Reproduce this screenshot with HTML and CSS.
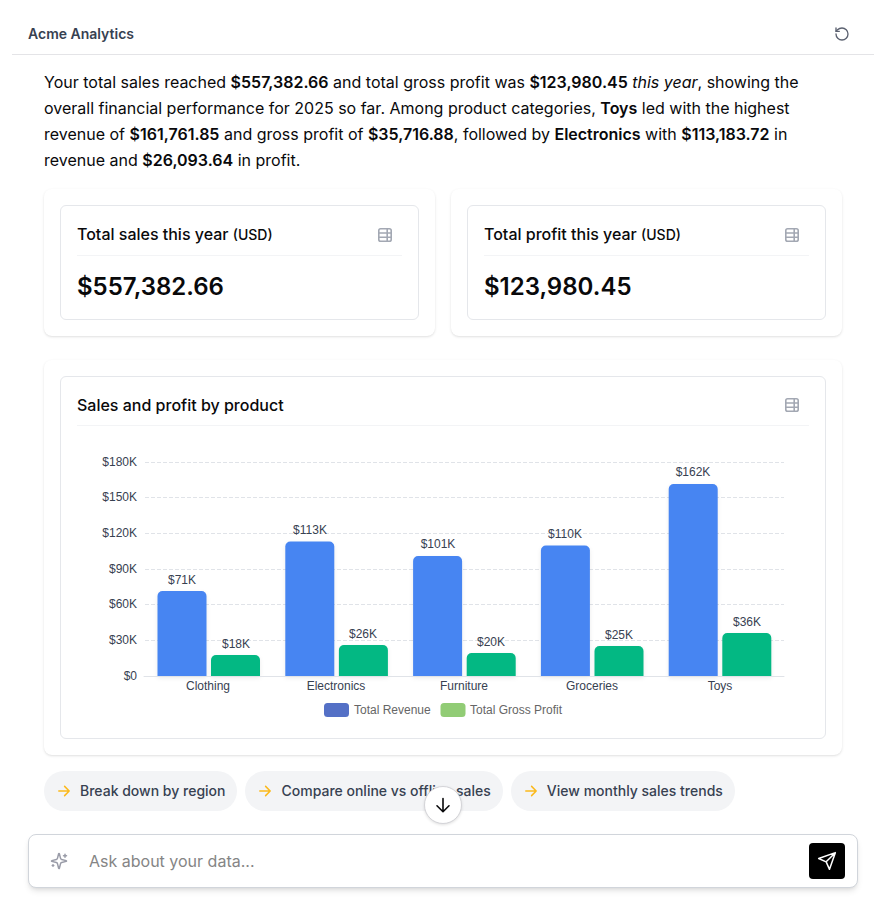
FILE: index.html
```html
<!DOCTYPE html>
<html lang="en">
<head>
<meta charset="utf-8">
<meta name="viewport" content="width=device-width, initial-scale=1">
<title>Acme Analytics</title>
<link rel="stylesheet" href="styles.css">
</head>
<body>
<svg class="defs" aria-hidden="true">
  <symbol id="icon-table" viewBox="0 0 16 16">
    <rect x="1.8" y="1.8" width="12.4" height="12.4" rx="1.8"/>
    <path d="M1.8 6h12.4M1.8 10.2h12.4M10.2 1.8v12.4"/>
  </symbol>
  <symbol id="icon-arrow" viewBox="0 0 16 16">
    <path d="M2.8 8h10.4M8.6 3.4 13.2 8l-4.6 4.6"/>
  </symbol>
</svg>
<div class="app">
  <header class="topbar">
    <h1 class="brand">Acme Analytics</h1>
    <button class="reset" type="button" aria-label="Restart conversation">
      <svg viewBox="0 0 24 24"><path d="M3 12a9 9 0 1 0 9-9 9.75 9.75 0 0 0-6.74 2.74L3 8"/><path d="M3 3v5h5"/></svg>
    </button>
  </header>

  <main class="thread">
    <p class="answer">Your total sales reached <strong>$557,382.66</strong> and total gross profit was <strong>$123,980.45</strong> <em>this year</em>, showing the overall financial performance for 2025 so far. Among product categories, <strong>Toys</strong> led with the highest revenue of <strong>$161,761.85</strong> and gross profit of <strong>$35,716.88</strong>, followed by <strong>Electronics</strong> with <strong>$113,183.72</strong> in revenue and <strong>$26,093.64</strong> in profit.</p>

    <div class="metrics">
      <section class="card">
        <div class="panel">
          <div class="panel-head">
            <h2 class="panel-title">Total sales this year <span class="unit">(USD)</span></h2>
            <button class="table-button" type="button" aria-label="View as table"><svg><use href="#icon-table"/></svg></button>
          </div>
          <p class="metric">$557,382.66</p>
        </div>
      </section>
      <section class="card">
        <div class="panel">
          <div class="panel-head">
            <h2 class="panel-title">Total profit this year <span class="unit">(USD)</span></h2>
            <button class="table-button" type="button" aria-label="View as table"><svg><use href="#icon-table"/></svg></button>
          </div>
          <p class="metric">$123,980.45</p>
        </div>
      </section>
    </div>

    <section class="card">
      <div class="panel">
        <div class="panel-head">
          <h2 class="panel-title">Sales and profit by product</h2>
          <button class="table-button" type="button" aria-label="View as table"><svg><use href="#icon-table"/></svg></button>
        </div>
        <svg class="chart" viewBox="0 0 732 296" role="img" aria-label="Sales and profit by product">
          <g class="grid">
            <path d="M68 36.5H707M68 71.5H707M68 107.5H707M68 143.5H707M68 178.5H707M68 214.5H707"/>
          </g>
          <g class="axis-y">
            <text x="60" y="40">$180K</text>
            <text x="60" y="75">$150K</text>
            <text x="60" y="111">$120K</text>
            <text x="60" y="147">$90K</text>
            <text x="60" y="182">$60K</text>
            <text x="60" y="218">$30K</text>
            <text x="60" y="254">$0</text>
          </g>
          <g class="revenue">
            <path d="M80.5 250V170a5 5 0 0 1 5-5h39a5 5 0 0 1 5 5V250z"/>
            <path d="M208.3 250V120.5a5 5 0 0 1 5-5h39a5 5 0 0 1 5 5V250z"/>
            <path d="M336.1 250V135a5 5 0 0 1 5-5h39a5 5 0 0 1 5 5V250z"/>
            <path d="M463.9 250V124.5a5 5 0 0 1 5-5h39a5 5 0 0 1 5 5V250z"/>
            <path d="M591.7 250V63a5 5 0 0 1 5-5h39a5 5 0 0 1 5 5V250z"/>
          </g>
          <g class="profit">
            <path d="M134 250V234a5 5 0 0 1 5-5h39a5 5 0 0 1 5 5V250z"/>
            <path d="M261.9 250V224a5 5 0 0 1 5-5h39a5 5 0 0 1 5 5V250z"/>
            <path d="M389.7 250V232a5 5 0 0 1 5-5h39a5 5 0 0 1 5 5V250z"/>
            <path d="M517.5 250V225a5 5 0 0 1 5-5h39a5 5 0 0 1 5 5V250z"/>
            <path d="M645.3 250V212a5 5 0 0 1 5-5h39a5 5 0 0 1 5 5V250z"/>
          </g>
          <path class="baseline" d="M67 250.5H707"/>
          <g class="labels">
            <text x="105" y="158">$71K</text>
            <text x="233" y="108">$113K</text>
            <text x="361" y="122">$101K</text>
            <text x="488" y="112">$110K</text>
            <text x="616" y="50">$162K</text>
            <text x="159" y="222">$18K</text>
            <text x="286" y="212">$26K</text>
            <text x="414" y="220">$20K</text>
            <text x="542" y="213">$25K</text>
            <text x="670" y="200">$36K</text>
            <text x="131" y="264">Clothing</text>
            <text x="259" y="264">Electronics</text>
            <text x="387" y="264">Furniture</text>
            <text x="515" y="264">Groceries</text>
            <text x="643" y="264">Toys</text>
          </g>
          <rect class="key-revenue" x="247" y="277" width="25" height="14" rx="3.5"/>
          <rect class="key-profit" x="363.5" y="277" width="25" height="14" rx="3.5"/>
          <g class="legend">
            <text x="277" y="288">Total Revenue</text>
            <text x="393" y="288">Total Gross Profit</text>
          </g>
        </svg>
      </div>
    </section>

    <div class="suggestions">
      <button class="chip" type="button"><svg><use href="#icon-arrow"/></svg><span class="chip-text">Break down by region</span></button>
      <button class="chip" type="button"><svg><use href="#icon-arrow"/></svg><span class="chip-text">Compare online vs offline sales</span></button>
      <button class="chip" type="button"><svg><use href="#icon-arrow"/></svg><span class="chip-text">View monthly sales trends</span></button>
    </div>
  </main>

  <footer class="dock">
    <button class="scroll-down" type="button" aria-label="Scroll to bottom">
      <svg viewBox="0 0 20 20"><path d="M10 3.5v13M4 10.8l6 5.9 6-5.9"/></svg>
    </button>
    <form class="composer">
      <svg class="sparkle" viewBox="0 0 24 24" aria-hidden="true"><path d="M9.937 15.5A2 2 0 0 0 8.5 14.063l-6.135-1.582a.5.5 0 0 1 0-.962L8.5 9.936A2 2 0 0 0 9.937 8.5l1.582-6.135a.5.5 0 0 1 .963 0L14.063 8.5A2 2 0 0 0 15.5 9.937l6.135 1.581a.5.5 0 0 1 0 .964L15.5 14.063a2 2 0 0 0-1.437 1.437l-1.582 6.135a.5.5 0 0 1-.963 0z"/><path d="M20 3v4M22 5h-4M4 17v2M5 18H3"/></svg>
      <input class="prompt" type="text" aria-label="Ask about your data" placeholder="Ask about your data...">
      <button class="send" type="submit" aria-label="Send">
        <svg viewBox="0 0 24 24"><path d="M22 2 11 13M22 2l-7 20-4-9-9-4z"/></svg>
      </button>
    </form>
  </footer>
</div>
</body>
</html>
```
FILE: styles.css
```css
* { box-sizing: border-box; }

body {
  margin: 0;
  background: #fff;
  color: #09090b;
  font-family: Inter, "Liberation Sans", sans-serif;
  font-size: 16px;
}

h1, h2, p { margin: 0; }

button {
  border: 0;
  padding: 0;
  background: none;
  color: inherit;
  font: inherit;
  cursor: pointer;
}

svg {
  display: block;
  fill: none;
  stroke: currentColor;
  stroke-linecap: round;
  stroke-linejoin: round;
}

.defs {
  position: absolute;
  width: 0;
  height: 0;
}

.app { margin: 0 11px 0 12px; }

.topbar {
  display: flex;
  align-items: center;
  justify-content: space-between;
  padding: 24px 24px 10px 16px;
  border-bottom: 1px solid #e4e4e7;
}

.brand {
  color: #374151;
  font-size: 14px;
  font-weight: 600;
  line-height: 20px;
}

.reset { color: #5b6170; }
.reset svg { width: 16px; height: 16px; stroke-width: 2; }

.thread {
  display: flex;
  flex-direction: column;
  padding: 14px 32px 0;
}

.answer {
  margin-bottom: 16px;
  line-height: 26px;
}

.answer strong { font-weight: 600; }

.metrics {
  display: grid;
  grid-template-columns: 1fr 1fr;
  gap: 16px;
  margin-bottom: 24px;
}

.card {
  padding: 16px;
  border-radius: 8px;
  background: #fff;
  box-shadow: 0 1px 3px rgba(0, 0, 0, 0.1), 0 1px 2px -1px rgba(0, 0, 0, 0.1);
}

.panel {
  padding: 16px;
  border: 1px solid #e5e7eb;
  border-radius: 6px;
}

.panel-head {
  display: flex;
  align-items: center;
  justify-content: space-between;
  padding: 0 9px 8px 0;
  border-bottom: 1px solid #f3f4f6;
}

.panel-title {
  font-size: 16px;
  font-weight: 500;
  line-height: 24px;
}

.unit { font-size: 14px; }

.table-button { color: #a3a8b3; }
.table-button svg { width: 16px; height: 16px; stroke-width: 1.6; }

.metric {
  padding-top: 15px;
  font-size: 24px;
  font-weight: 600;
  line-height: 32px;
}

.chart {
  width: 100%;
  height: auto;
  stroke: none;
  font-family: "Liberation Sans", Arial, sans-serif;
  font-size: 12px;
}

.grid { stroke: #e0e3e8; stroke-dasharray: 4 2; stroke-linecap: butt; }
.axis-y { fill: #374151; text-anchor: end; }
.labels { fill: #374151; text-anchor: middle; }
.legend { fill: #666; }
.revenue { fill: #4785f2; }
.profit { fill: #03b883; }
.revenue, .profit { filter: drop-shadow(0 2px 2px rgba(0, 0, 0, 0.08)); }
.baseline { stroke: #e0e3e8; }
.key-revenue { fill: #5470c6; }
.key-profit { fill: #91cc75; }

.suggestions {
  display: flex;
  flex-wrap: wrap;
  gap: 8px;
  margin-top: 16px;
}

.chip {
  display: flex;
  align-items: center;
  gap: 8px;
  height: 40px;
  padding: 0 12px;
  border-radius: 20px;
  background: #f3f4f6;
  color: #374151;
  font-size: 14px;
  font-weight: 500;
}

.chip-text { padding-bottom: 2px; }

.chip svg {
  width: 16px;
  height: 16px;
  color: #fbb91c;
  stroke-width: 1.5;
}

.dock {
  position: relative;
  padding: 23px 16px 28px;
}

.scroll-down {
  position: absolute;
  top: -25px;
  left: 50%;
  display: grid;
  place-items: center;
  width: 38px;
  height: 38px;
  margin-left: -19px;
  border: 1px solid #d4d4d8;
  border-radius: 50%;
  background: #fff;
  box-shadow: 0 1px 3px rgba(0, 0, 0, 0.12);
}

.scroll-down svg { width: 20px; height: 20px; stroke-width: 1.6; }

.composer {
  display: flex;
  align-items: center;
  padding: 8px 12px 8px 21px;
  border: 1px solid #d1d5db;
  border-radius: 8px;
  background: #fff;
  box-shadow: 0 4px 6px -1px rgba(0, 0, 0, 0.1), 0 2px 4px -2px rgba(0, 0, 0, 0.1);
}

.sparkle {
  width: 18px;
  height: 18px;
  color: #9a9ca8;
  stroke-width: 2;
}

.prompt {
  flex: 1;
  min-width: 0;
  margin-left: 21px;
  padding: 0;
  border: 0;
  outline: 0;
  background: transparent;
  color: inherit;
  font: inherit;
}

.prompt::placeholder { color: #858585; opacity: 1; }

.send {
  display: grid;
  place-items: center;
  width: 36px;
  height: 36px;
  border-radius: 4px;
  background: #000;
  color: #fff;
}

.send svg { width: 20px; height: 20px; stroke-width: 1.8; }
```
